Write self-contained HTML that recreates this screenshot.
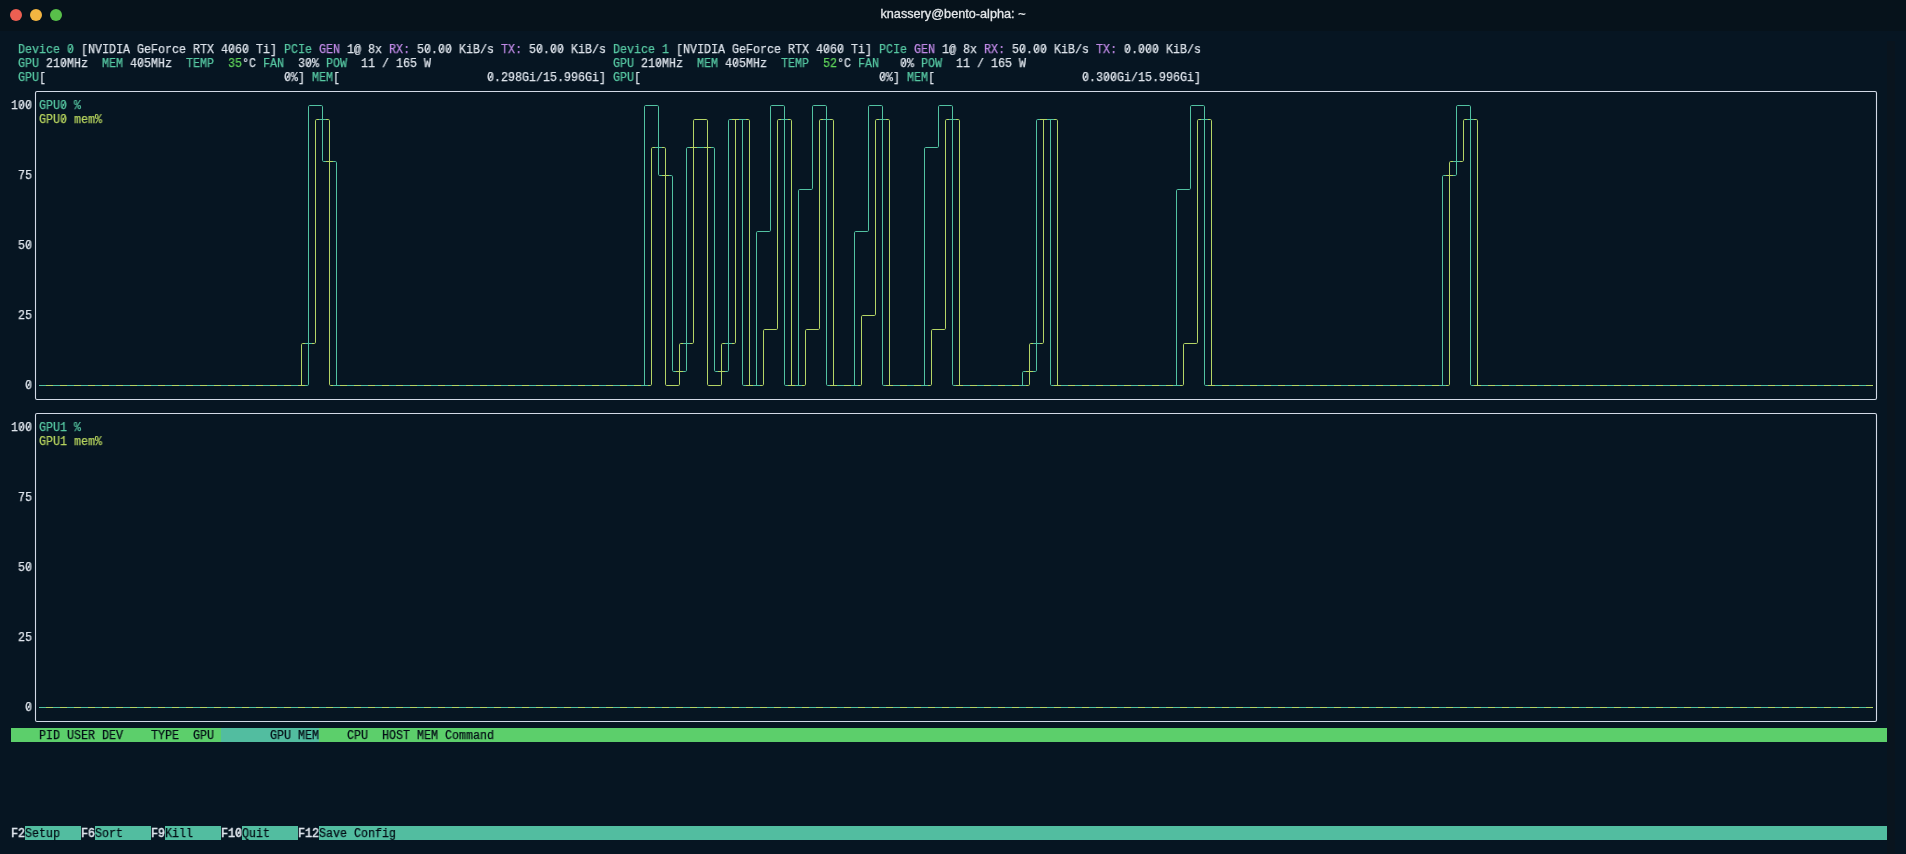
<!DOCTYPE html>
<html><head><meta charset="utf-8"><style>
html,body{margin:0;padding:0;}
body{width:1906px;height:854px;overflow:hidden;background:#061522;position:relative;}
.tb{position:absolute;left:0;top:0;width:1906px;height:31px;background:#06121b;}
.dot{position:absolute;top:9px;width:12px;height:12px;border-radius:50%;}
.title{position:absolute;left:0;top:6px;width:1906px;text-align:center;font-family:"Liberation Sans",sans-serif;font-size:12.7px;color:#e4e7ea;line-height:16px;-webkit-text-stroke:0.3px #e4e7ea;will-change:transform;}
.t{position:absolute;height:14px;line-height:14px;font-family:"Liberation Mono",monospace;font-size:12.5px;white-space:pre;transform-origin:0 0;transform:scaleX(0.93318);-webkit-text-stroke:0.25px currentColor;will-change:transform;}
.bar{position:absolute;height:14px;}
.sb{position:absolute;left:1887px;top:41px;width:8px;height:813px;background:#09141e;}
</style></head><body>
<div class="tb"></div>
<div class="dot" style="left:10px;background:#ec5f52"></div>
<div class="dot" style="left:30px;background:#f3b541"></div>
<div class="dot" style="left:50px;background:#58c04a"></div>
<div class="title">knassery@bento-alpha: ~</div>
<div class="sb"></div>

<div class="t" style="left:18px;top:43px;color:#57c8a3">Device 0</div>
<div class="t" style="left:74px;top:43px;color:#dee4ec"> [NVIDIA GeForce RTX 4060 Ti] </div>
<div class="t" style="left:284px;top:43px;color:#57c8a3">PCIe</div>
<div class="t" style="left:312px;top:43px;color:#dee4ec"> </div>
<div class="t" style="left:319px;top:43px;color:#c08ae6">GEN</div>
<div class="t" style="left:340px;top:43px;color:#dee4ec"> 1@ 8x </div>
<div class="t" style="left:389px;top:43px;color:#c08ae6">RX:</div>
<div class="t" style="left:410px;top:43px;color:#dee4ec"> 50.00 KiB/s </div>
<div class="t" style="left:501px;top:43px;color:#c08ae6">TX:</div>
<div class="t" style="left:522px;top:43px;color:#dee4ec"> 50.00 KiB/s</div>
<div class="t" style="left:613px;top:43px;color:#57c8a3">Device 1</div>
<div class="t" style="left:669px;top:43px;color:#dee4ec"> [NVIDIA GeForce RTX 4060 Ti] </div>
<div class="t" style="left:879px;top:43px;color:#57c8a3">PCIe</div>
<div class="t" style="left:907px;top:43px;color:#dee4ec"> </div>
<div class="t" style="left:914px;top:43px;color:#c08ae6">GEN</div>
<div class="t" style="left:935px;top:43px;color:#dee4ec"> 1@ 8x </div>
<div class="t" style="left:984px;top:43px;color:#c08ae6">RX:</div>
<div class="t" style="left:1005px;top:43px;color:#dee4ec"> 50.00 KiB/s </div>
<div class="t" style="left:1096px;top:43px;color:#c08ae6">TX:</div>
<div class="t" style="left:1117px;top:43px;color:#dee4ec"> 0.000 KiB/s</div>
<div class="t" style="left:18px;top:57px;color:#57c8a3">GPU</div>
<div class="t" style="left:39px;top:57px;color:#dee4ec"> 210MHz  </div>
<div class="t" style="left:102px;top:57px;color:#57c8a3">MEM</div>
<div class="t" style="left:123px;top:57px;color:#dee4ec"> 405MHz  </div>
<div class="t" style="left:186px;top:57px;color:#57c8a3">TEMP</div>
<div class="t" style="left:214px;top:57px;color:#dee4ec">  </div>
<div class="t" style="left:228px;top:57px;color:#5fd35a">35</div>
<div class="t" style="left:242px;top:57px;color:#dee4ec">°C </div>
<div class="t" style="left:263px;top:57px;color:#57c8a3">FAN</div>
<div class="t" style="left:284px;top:57px;color:#dee4ec">  30% </div>
<div class="t" style="left:326px;top:57px;color:#57c8a3">POW</div>
<div class="t" style="left:347px;top:57px;color:#dee4ec">  11 / 165 W</div>
<div class="t" style="left:613px;top:57px;color:#57c8a3">GPU</div>
<div class="t" style="left:634px;top:57px;color:#dee4ec"> 210MHz  </div>
<div class="t" style="left:697px;top:57px;color:#57c8a3">MEM</div>
<div class="t" style="left:718px;top:57px;color:#dee4ec"> 405MHz  </div>
<div class="t" style="left:781px;top:57px;color:#57c8a3">TEMP</div>
<div class="t" style="left:809px;top:57px;color:#dee4ec">  </div>
<div class="t" style="left:823px;top:57px;color:#5fd35a">52</div>
<div class="t" style="left:837px;top:57px;color:#dee4ec">°C </div>
<div class="t" style="left:858px;top:57px;color:#57c8a3">FAN</div>
<div class="t" style="left:879px;top:57px;color:#dee4ec">   0% </div>
<div class="t" style="left:921px;top:57px;color:#57c8a3">POW</div>
<div class="t" style="left:942px;top:57px;color:#dee4ec">  11 / 165 W</div>
<div class="t" style="left:18px;top:71px;color:#57c8a3">GPU</div>
<div class="t" style="left:39px;top:71px;color:#dee4ec">[</div>
<div class="t" style="left:284px;top:71px;color:#dee4ec">0%]</div>
<div class="t" style="left:312px;top:71px;color:#57c8a3">MEM</div>
<div class="t" style="left:333px;top:71px;color:#dee4ec">[</div>
<div class="t" style="left:487px;top:71px;color:#dee4ec">0.298Gi/15.996Gi]</div>
<div class="t" style="left:613px;top:71px;color:#57c8a3">GPU</div>
<div class="t" style="left:634px;top:71px;color:#dee4ec">[</div>
<div class="t" style="left:879px;top:71px;color:#dee4ec">0%]</div>
<div class="t" style="left:907px;top:71px;color:#57c8a3">MEM</div>
<div class="t" style="left:928px;top:71px;color:#dee4ec">[</div>
<div class="t" style="left:1082px;top:71px;color:#dee4ec">0.300Gi/15.996Gi]</div>
<div class="t" style="left:11px;top:99px;color:#dee4ec">100</div>
<div class="t" style="left:11px;top:169px;color:#dee4ec"> 75</div>
<div class="t" style="left:11px;top:239px;color:#dee4ec"> 50</div>
<div class="t" style="left:11px;top:309px;color:#dee4ec"> 25</div>
<div class="t" style="left:11px;top:379px;color:#dee4ec">  0</div>
<div class="t" style="left:11px;top:421px;color:#dee4ec">100</div>
<div class="t" style="left:11px;top:491px;color:#dee4ec"> 75</div>
<div class="t" style="left:11px;top:561px;color:#dee4ec"> 50</div>
<div class="t" style="left:11px;top:631px;color:#dee4ec"> 25</div>
<div class="t" style="left:11px;top:701px;color:#dee4ec">  0</div>
<svg width="1906" height="854" style="position:absolute;left:0;top:0">
<path d="M37 91.5H1875Q1876.5 91.5 1876.5 93V398Q1876.5 399.5 1875 399.5H37Q35.5 399.5 35.5 398V93Q35.5 91.5 37 91.5ZM37 413.5H1875Q1876.5 413.5 1876.5 415V720Q1876.5 721.5 1875 721.5H37Q35.5 721.5 35.5 720V415Q35.5 413.5 37 413.5Z" fill="none" stroke="#d2d9e6" stroke-width="1.1"/>
<path d="M39 385.5H46M53 385.5H60M67 385.5H74M81 385.5H88M95 385.5H102M109 385.5H116M123 385.5H130M137 385.5H144M151 385.5H158M165 385.5H172M179 385.5H186M193 385.5H200M207 385.5H214M221 385.5H228M235 385.5H242M249 385.5H256M263 385.5H270M277 385.5H284M291 385.5H298M305 385.5H307.3Q308.5 385.5 308.5 384.3V378M308.5 112V126M308.5 126V140M308.5 140V154M308.5 154V168M308.5 168V182M308.5 182V196M308.5 196V210M308.5 210V224M308.5 224V238M308.5 238V252M308.5 252V266M308.5 266V280M308.5 280V294M308.5 294V308M308.5 308V322M308.5 322V336M305 343.5H312M308.5 336V350M308.5 350V364M308.5 364V378M312 105.5H309.7Q308.5 105.5 308.5 106.7V112M312 105.5H319M319 105.5H321.3Q322.5 105.5 322.5 106.7V112M319 119.5H326M322.5 112V126M322.5 126V140M322.5 140V154M326 161.5H323.7Q322.5 161.5 322.5 160.3V154M333 161.5H335.3Q336.5 161.5 336.5 162.7V168M336.5 168V182M336.5 182V196M336.5 196V210M336.5 210V224M336.5 224V238M336.5 238V252M336.5 252V266M336.5 266V280M336.5 280V294M336.5 294V308M336.5 308V322M336.5 322V336M336.5 336V350M336.5 350V364M336.5 364V378M333 385.5H340M336.5 378V385.5M347 385.5H354M361 385.5H368M375 385.5H382M389 385.5H396M403 385.5H410M417 385.5H424M431 385.5H438M445 385.5H452M459 385.5H466M473 385.5H480M487 385.5H494M501 385.5H508M515 385.5H522M529 385.5H536M543 385.5H550M557 385.5H564M571 385.5H578M585 385.5H592M599 385.5H606M613 385.5H620M627 385.5H634M641 385.5H648M644.5 378V385.5M644.5 112V126M644.5 126V140M644.5 140V154M644.5 154V168M644.5 168V182M644.5 182V196M644.5 196V210M644.5 210V224M644.5 224V238M644.5 238V252M644.5 252V266M644.5 266V280M644.5 280V294M644.5 294V308M644.5 308V322M644.5 322V336M644.5 336V350M644.5 350V364M644.5 364V378M648 105.5H645.7Q644.5 105.5 644.5 106.7V112M648 105.5H655M655 105.5H657.3Q658.5 105.5 658.5 106.7V112M658.5 112V126M658.5 126V140M655 147.5H662M658.5 140V154M658.5 154V168M662 175.5H659.7Q658.5 175.5 658.5 174.3V168M669 175.5H671.3Q672.5 175.5 672.5 176.7V182M672.5 182V196M672.5 196V210M672.5 210V224M672.5 224V238M672.5 238V252M672.5 252V266M672.5 266V280M672.5 280V294M672.5 294V308M672.5 308V322M672.5 322V336M672.5 336V350M672.5 350V364M676 371.5H673.7Q672.5 371.5 672.5 370.3V364M683 371.5H685.3Q686.5 371.5 686.5 370.3V364M686.5 154V168M686.5 168V182M686.5 182V196M686.5 196V210M686.5 210V224M686.5 224V238M686.5 238V252M686.5 252V266M686.5 266V280M686.5 280V294M686.5 294V308M686.5 308V322M686.5 322V336M683 343.5H690M686.5 336V350M686.5 350V364M690 147.5H687.7Q686.5 147.5 686.5 148.7V154M697 147.5H704M711 147.5H713.3Q714.5 147.5 714.5 148.7V154M714.5 154V168M714.5 168V182M714.5 182V196M714.5 196V210M714.5 210V224M714.5 224V238M714.5 238V252M714.5 252V266M714.5 266V280M714.5 280V294M714.5 294V308M714.5 308V322M714.5 322V336M714.5 336V350M714.5 350V364M718 371.5H715.7Q714.5 371.5 714.5 370.3V364M725 371.5H727.3Q728.5 371.5 728.5 370.3V364M728.5 126V140M728.5 140V154M728.5 154V168M728.5 168V182M728.5 182V196M728.5 196V210M728.5 210V224M728.5 224V238M728.5 238V252M728.5 252V266M728.5 266V280M728.5 280V294M728.5 294V308M728.5 308V322M728.5 322V336M725 343.5H732M728.5 336V350M728.5 350V364M732 119.5H729.7Q728.5 119.5 728.5 120.7V126M739 119.5H746M742.5 119.5V126M742.5 126V140M742.5 140V154M742.5 154V168M742.5 168V182M742.5 182V196M742.5 196V210M742.5 210V224M742.5 224V238M742.5 238V252M742.5 252V266M742.5 266V280M742.5 280V294M742.5 294V308M742.5 308V322M742.5 322V336M742.5 336V350M742.5 350V364M742.5 364V378M746 385.5H743.7Q742.5 385.5 742.5 384.3V378M753 385.5H760M756.5 378V385.5M756.5 238V252M756.5 252V266M756.5 266V280M756.5 280V294M756.5 294V308M756.5 308V322M756.5 322V336M756.5 336V350M756.5 350V364M756.5 364V378M760 231.5H757.7Q756.5 231.5 756.5 232.7V238M760 231.5H767M767 231.5H769.3Q770.5 231.5 770.5 230.3V224M770.5 112V126M770.5 126V140M770.5 140V154M770.5 154V168M770.5 168V182M770.5 182V196M770.5 196V210M770.5 210V224M774 105.5H771.7Q770.5 105.5 770.5 106.7V112M774 105.5H781M781 105.5H783.3Q784.5 105.5 784.5 106.7V112M781 119.5H788M784.5 112V126M784.5 126V140M784.5 140V154M784.5 154V168M784.5 168V182M784.5 182V196M784.5 196V210M784.5 210V224M784.5 224V238M784.5 238V252M784.5 252V266M784.5 266V280M784.5 280V294M784.5 294V308M784.5 308V322M784.5 322V336M784.5 336V350M784.5 350V364M784.5 364V378M788 385.5H785.7Q784.5 385.5 784.5 384.3V378M795 385.5H802M798.5 378V385.5M798.5 196V210M798.5 210V224M798.5 224V238M798.5 238V252M798.5 252V266M798.5 266V280M798.5 280V294M798.5 294V308M798.5 308V322M798.5 322V336M798.5 336V350M798.5 350V364M798.5 364V378M802 189.5H799.7Q798.5 189.5 798.5 190.7V196M802 189.5H809M809 189.5H811.3Q812.5 189.5 812.5 188.3V182M812.5 112V126M812.5 126V140M812.5 140V154M812.5 154V168M812.5 168V182M816 105.5H813.7Q812.5 105.5 812.5 106.7V112M816 105.5H823M823 105.5H825.3Q826.5 105.5 826.5 106.7V112M823 119.5H830M826.5 112V126M826.5 126V140M826.5 140V154M826.5 154V168M826.5 168V182M826.5 182V196M826.5 196V210M826.5 210V224M826.5 224V238M826.5 238V252M826.5 252V266M826.5 266V280M826.5 280V294M826.5 294V308M826.5 308V322M826.5 322V336M826.5 336V350M826.5 350V364M826.5 364V378M830 385.5H827.7Q826.5 385.5 826.5 384.3V378M837 385.5H844M851 385.5H858M854.5 378V385.5M854.5 238V252M854.5 252V266M854.5 266V280M854.5 280V294M854.5 294V308M854.5 308V322M854.5 322V336M854.5 336V350M854.5 350V364M854.5 364V378M858 231.5H855.7Q854.5 231.5 854.5 232.7V238M858 231.5H865M865 231.5H867.3Q868.5 231.5 868.5 230.3V224M868.5 112V126M868.5 126V140M868.5 140V154M868.5 154V168M868.5 168V182M868.5 182V196M868.5 196V210M868.5 210V224M872 105.5H869.7Q868.5 105.5 868.5 106.7V112M872 105.5H879M879 105.5H881.3Q882.5 105.5 882.5 106.7V112M879 119.5H886M882.5 112V126M882.5 126V140M882.5 140V154M882.5 154V168M882.5 168V182M882.5 182V196M882.5 196V210M882.5 210V224M882.5 224V238M882.5 238V252M882.5 252V266M882.5 266V280M882.5 280V294M882.5 294V308M882.5 308V322M882.5 322V336M882.5 336V350M882.5 350V364M882.5 364V378M886 385.5H883.7Q882.5 385.5 882.5 384.3V378M893 385.5H900M907 385.5H914M921 385.5H928M924.5 378V385.5M924.5 154V168M924.5 168V182M924.5 182V196M924.5 196V210M924.5 210V224M924.5 224V238M924.5 238V252M924.5 252V266M924.5 266V280M924.5 280V294M924.5 294V308M924.5 308V322M924.5 322V336M924.5 336V350M924.5 350V364M924.5 364V378M928 147.5H925.7Q924.5 147.5 924.5 148.7V154M928 147.5H935M935 147.5H937.3Q938.5 147.5 938.5 146.3V140M938.5 112V126M938.5 126V140M942 105.5H939.7Q938.5 105.5 938.5 106.7V112M942 105.5H949M949 105.5H951.3Q952.5 105.5 952.5 106.7V112M949 119.5H956M952.5 112V126M952.5 126V140M952.5 140V154M952.5 154V168M952.5 168V182M952.5 182V196M952.5 196V210M952.5 210V224M952.5 224V238M952.5 238V252M952.5 252V266M952.5 266V280M952.5 280V294M952.5 294V308M952.5 308V322M952.5 322V336M952.5 336V350M952.5 350V364M952.5 364V378M956 385.5H953.7Q952.5 385.5 952.5 384.3V378M963 385.5H970M977 385.5H984M991 385.5H998M1005 385.5H1012M1019 385.5H1026M1022.5 378V385.5M1026 371.5H1023.7Q1022.5 371.5 1022.5 372.7V378M1033 371.5H1035.3Q1036.5 371.5 1036.5 370.3V364M1036.5 126V140M1036.5 140V154M1036.5 154V168M1036.5 168V182M1036.5 182V196M1036.5 196V210M1036.5 210V224M1036.5 224V238M1036.5 238V252M1036.5 252V266M1036.5 266V280M1036.5 280V294M1036.5 294V308M1036.5 308V322M1036.5 322V336M1033 343.5H1040M1036.5 336V350M1036.5 350V364M1040 119.5H1037.7Q1036.5 119.5 1036.5 120.7V126M1047 119.5H1054M1050.5 119.5V126M1050.5 126V140M1050.5 140V154M1050.5 154V168M1050.5 168V182M1050.5 182V196M1050.5 196V210M1050.5 210V224M1050.5 224V238M1050.5 238V252M1050.5 252V266M1050.5 266V280M1050.5 280V294M1050.5 294V308M1050.5 308V322M1050.5 322V336M1050.5 336V350M1050.5 350V364M1050.5 364V378M1054 385.5H1051.7Q1050.5 385.5 1050.5 384.3V378M1061 385.5H1068M1075 385.5H1082M1089 385.5H1096M1103 385.5H1110M1117 385.5H1124M1131 385.5H1138M1145 385.5H1152M1159 385.5H1166M1173 385.5H1180M1176.5 378V385.5M1176.5 196V210M1176.5 210V224M1176.5 224V238M1176.5 238V252M1176.5 252V266M1176.5 266V280M1176.5 280V294M1176.5 294V308M1176.5 308V322M1176.5 322V336M1176.5 336V350M1176.5 350V364M1176.5 364V378M1180 189.5H1177.7Q1176.5 189.5 1176.5 190.7V196M1180 189.5H1187M1187 189.5H1189.3Q1190.5 189.5 1190.5 188.3V182M1190.5 112V126M1190.5 126V140M1190.5 140V154M1190.5 154V168M1190.5 168V182M1194 105.5H1191.7Q1190.5 105.5 1190.5 106.7V112M1194 105.5H1201M1201 105.5H1203.3Q1204.5 105.5 1204.5 106.7V112M1201 119.5H1208M1204.5 112V126M1204.5 126V140M1204.5 140V154M1204.5 154V168M1204.5 168V182M1204.5 182V196M1204.5 196V210M1204.5 210V224M1204.5 224V238M1204.5 238V252M1204.5 252V266M1204.5 266V280M1204.5 280V294M1204.5 294V308M1204.5 308V322M1204.5 322V336M1204.5 336V350M1204.5 350V364M1204.5 364V378M1208 385.5H1205.7Q1204.5 385.5 1204.5 384.3V378M1215 385.5H1222M1229 385.5H1236M1243 385.5H1250M1257 385.5H1264M1271 385.5H1278M1285 385.5H1292M1299 385.5H1306M1313 385.5H1320M1327 385.5H1334M1341 385.5H1348M1355 385.5H1362M1369 385.5H1376M1383 385.5H1390M1397 385.5H1404M1411 385.5H1418M1425 385.5H1432M1439 385.5H1446M1442.5 378V385.5M1442.5 182V196M1442.5 196V210M1442.5 210V224M1442.5 224V238M1442.5 238V252M1442.5 252V266M1442.5 266V280M1442.5 280V294M1442.5 294V308M1442.5 308V322M1442.5 322V336M1442.5 336V350M1442.5 350V364M1442.5 364V378M1446 175.5H1443.7Q1442.5 175.5 1442.5 176.7V182M1453 175.5H1455.3Q1456.5 175.5 1456.5 174.3V168M1456.5 112V126M1456.5 126V140M1456.5 140V154M1453 161.5H1460M1456.5 154V168M1460 105.5H1457.7Q1456.5 105.5 1456.5 106.7V112M1460 105.5H1467M1467 105.5H1469.3Q1470.5 105.5 1470.5 106.7V112M1467 119.5H1474M1470.5 112V126M1470.5 126V140M1470.5 140V154M1470.5 154V168M1470.5 168V182M1470.5 182V196M1470.5 196V210M1470.5 210V224M1470.5 224V238M1470.5 238V252M1470.5 252V266M1470.5 266V280M1470.5 280V294M1470.5 294V308M1470.5 308V322M1470.5 322V336M1470.5 336V350M1470.5 350V364M1470.5 364V378M1474 385.5H1471.7Q1470.5 385.5 1470.5 384.3V378M1481 385.5H1488M1495 385.5H1502M1509 385.5H1516M1523 385.5H1530M1537 385.5H1544M1551 385.5H1558M1565 385.5H1572M1579 385.5H1586M1593 385.5H1600M1607 385.5H1614M1621 385.5H1628M1635 385.5H1642M1649 385.5H1656M1663 385.5H1670M1677 385.5H1684M1691 385.5H1698M1705 385.5H1712M1719 385.5H1726M1733 385.5H1740M1747 385.5H1754M1761 385.5H1768M1775 385.5H1782M1789 385.5H1796M1803 385.5H1810M1817 385.5H1824M1831 385.5H1838M1845 385.5H1852M1859 385.5H1866M39 707.5H46M53 707.5H60M67 707.5H74M81 707.5H88M95 707.5H102M109 707.5H116M123 707.5H130M137 707.5H144M151 707.5H158M165 707.5H172M179 707.5H186M193 707.5H200M207 707.5H214M221 707.5H228M235 707.5H242M249 707.5H256M263 707.5H270M277 707.5H284M291 707.5H298M305 707.5H312M319 707.5H326M333 707.5H340M347 707.5H354M361 707.5H368M375 707.5H382M389 707.5H396M403 707.5H410M417 707.5H424M431 707.5H438M445 707.5H452M459 707.5H466M473 707.5H480M487 707.5H494M501 707.5H508M515 707.5H522M529 707.5H536M543 707.5H550M557 707.5H564M571 707.5H578M585 707.5H592M599 707.5H606M613 707.5H620M627 707.5H634M641 707.5H648M655 707.5H662M669 707.5H676M683 707.5H690M697 707.5H704M711 707.5H718M725 707.5H732M739 707.5H746M753 707.5H760M767 707.5H774M781 707.5H788M795 707.5H802M809 707.5H816M823 707.5H830M837 707.5H844M851 707.5H858M865 707.5H872M879 707.5H886M893 707.5H900M907 707.5H914M921 707.5H928M935 707.5H942M949 707.5H956M963 707.5H970M977 707.5H984M991 707.5H998M1005 707.5H1012M1019 707.5H1026M1033 707.5H1040M1047 707.5H1054M1061 707.5H1068M1075 707.5H1082M1089 707.5H1096M1103 707.5H1110M1117 707.5H1124M1131 707.5H1138M1145 707.5H1152M1159 707.5H1166M1173 707.5H1180M1187 707.5H1194M1201 707.5H1208M1215 707.5H1222M1229 707.5H1236M1243 707.5H1250M1257 707.5H1264M1271 707.5H1278M1285 707.5H1292M1299 707.5H1306M1313 707.5H1320M1327 707.5H1334M1341 707.5H1348M1355 707.5H1362M1369 707.5H1376M1383 707.5H1390M1397 707.5H1404M1411 707.5H1418M1425 707.5H1432M1439 707.5H1446M1453 707.5H1460M1467 707.5H1474M1481 707.5H1488M1495 707.5H1502M1509 707.5H1516M1523 707.5H1530M1537 707.5H1544M1551 707.5H1558M1565 707.5H1572M1579 707.5H1586M1593 707.5H1600M1607 707.5H1614M1621 707.5H1628M1635 707.5H1642M1649 707.5H1656M1663 707.5H1670M1677 707.5H1684M1691 707.5H1698M1705 707.5H1712M1719 707.5H1726M1733 707.5H1740M1747 707.5H1754M1761 707.5H1768M1775 707.5H1782M1789 707.5H1796M1803 707.5H1810M1817 707.5H1824M1831 707.5H1838M1845 707.5H1852M1859 707.5H1866" fill="none" stroke="#52c2a2" stroke-width="1"/>
<path d="M46 385.5H53M60 385.5H67M74 385.5H81M88 385.5H95M102 385.5H109M116 385.5H123M130 385.5H137M144 385.5H151M158 385.5H165M172 385.5H179M186 385.5H193M200 385.5H207M214 385.5H221M228 385.5H235M242 385.5H249M256 385.5H263M270 385.5H277M284 385.5H291M298 385.5H305M301.5 378V385.5M326 161.5H333M329.5 154V168M340 385.5H347M354 385.5H361M368 385.5H375M382 385.5H389M396 385.5H403M410 385.5H417M424 385.5H431M438 385.5H445M452 385.5H459M466 385.5H473M480 385.5H487M494 385.5H501M508 385.5H515M522 385.5H529M536 385.5H543M550 385.5H557M564 385.5H571M578 385.5H585M592 385.5H599M606 385.5H613M620 385.5H627M634 385.5H641M662 175.5H669M665.5 168V182M676 371.5H683M679.5 364V378M690 147.5H697M693.5 140V154M704 147.5H711M707.5 140V154M718 371.5H725M721.5 364V378M732 119.5H739M735.5 119.5V126M746 385.5H753M749.5 378V385.5M788 385.5H795M791.5 378V385.5M830 385.5H837M833.5 378V385.5M844 385.5H851M886 385.5H893M889.5 378V385.5M900 385.5H907M914 385.5H921M956 385.5H963M959.5 378V385.5M970 385.5H977M984 385.5H991M998 385.5H1005M1012 385.5H1019M1026 371.5H1033M1029.5 364V378M1040 119.5H1047M1043.5 119.5V126M1054 385.5H1061M1057.5 378V385.5M1068 385.5H1075M1082 385.5H1089M1096 385.5H1103M1110 385.5H1117M1124 385.5H1131M1138 385.5H1145M1152 385.5H1159M1166 385.5H1173M1208 385.5H1215M1211.5 378V385.5M1222 385.5H1229M1236 385.5H1243M1250 385.5H1257M1264 385.5H1271M1278 385.5H1285M1292 385.5H1299M1306 385.5H1313M1320 385.5H1327M1334 385.5H1341M1348 385.5H1355M1362 385.5H1369M1376 385.5H1383M1390 385.5H1397M1404 385.5H1411M1418 385.5H1425M1432 385.5H1439M1446 175.5H1453M1449.5 168V182M1474 385.5H1481M1477.5 378V385.5M1488 385.5H1495M1502 385.5H1509M1516 385.5H1523M1530 385.5H1537M1544 385.5H1551M1558 385.5H1565M1572 385.5H1579M1586 385.5H1593M1600 385.5H1607M1614 385.5H1621M1628 385.5H1635M1642 385.5H1649M1656 385.5H1663M1670 385.5H1677M1684 385.5H1691M1698 385.5H1705M1712 385.5H1719M1726 385.5H1733M1740 385.5H1747M1754 385.5H1761M1768 385.5H1775M1782 385.5H1789M1796 385.5H1803M1810 385.5H1817M1824 385.5H1831M1838 385.5H1845M1852 385.5H1859M1866 385.5H1873M301.5 350V364M301.5 364V378M305 343.5H302.7Q301.5 343.5 301.5 344.7V350M312 343.5H314.3Q315.5 343.5 315.5 342.3V336M315.5 126V140M315.5 140V154M315.5 154V168M315.5 168V182M315.5 182V196M315.5 196V210M315.5 210V224M315.5 224V238M315.5 238V252M315.5 252V266M315.5 266V280M315.5 280V294M315.5 294V308M315.5 308V322M315.5 322V336M319 119.5H316.7Q315.5 119.5 315.5 120.7V126M326 119.5H328.3Q329.5 119.5 329.5 120.7V126M329.5 126V140M329.5 140V154M329.5 168V182M329.5 182V196M329.5 196V210M329.5 210V224M329.5 224V238M329.5 238V252M329.5 252V266M329.5 266V280M329.5 280V294M329.5 294V308M329.5 308V322M329.5 322V336M329.5 336V350M329.5 350V364M329.5 364V378M333 385.5H330.7Q329.5 385.5 329.5 384.3V378M648 385.5H650.3Q651.5 385.5 651.5 384.3V378M651.5 154V168M651.5 168V182M651.5 182V196M651.5 196V210M651.5 210V224M651.5 224V238M651.5 238V252M651.5 252V266M651.5 266V280M651.5 280V294M651.5 294V308M651.5 308V322M651.5 322V336M651.5 336V350M651.5 350V364M651.5 364V378M655 147.5H652.7Q651.5 147.5 651.5 148.7V154M662 147.5H664.3Q665.5 147.5 665.5 148.7V154M665.5 154V168M665.5 182V196M665.5 196V210M665.5 210V224M665.5 224V238M665.5 238V252M665.5 252V266M665.5 266V280M665.5 280V294M665.5 294V308M665.5 308V322M665.5 322V336M665.5 336V350M665.5 350V364M665.5 364V378M669 385.5H666.7Q665.5 385.5 665.5 384.3V378M669 385.5H676M676 385.5H678.3Q679.5 385.5 679.5 384.3V378M679.5 350V364M683 343.5H680.7Q679.5 343.5 679.5 344.7V350M690 343.5H692.3Q693.5 343.5 693.5 342.3V336M693.5 126V140M693.5 154V168M693.5 168V182M693.5 182V196M693.5 196V210M693.5 210V224M693.5 224V238M693.5 238V252M693.5 252V266M693.5 266V280M693.5 280V294M693.5 294V308M693.5 308V322M693.5 322V336M697 119.5H694.7Q693.5 119.5 693.5 120.7V126M697 119.5H704M704 119.5H706.3Q707.5 119.5 707.5 120.7V126M707.5 126V140M707.5 154V168M707.5 168V182M707.5 182V196M707.5 196V210M707.5 210V224M707.5 224V238M707.5 238V252M707.5 252V266M707.5 266V280M707.5 280V294M707.5 294V308M707.5 308V322M707.5 322V336M707.5 336V350M707.5 350V364M707.5 364V378M711 385.5H708.7Q707.5 385.5 707.5 384.3V378M711 385.5H718M718 385.5H720.3Q721.5 385.5 721.5 384.3V378M721.5 350V364M725 343.5H722.7Q721.5 343.5 721.5 344.7V350M732 343.5H734.3Q735.5 343.5 735.5 342.3V336M735.5 126V140M735.5 140V154M735.5 154V168M735.5 168V182M735.5 182V196M735.5 196V210M735.5 210V224M735.5 224V238M735.5 238V252M735.5 252V266M735.5 266V280M735.5 280V294M735.5 294V308M735.5 308V322M735.5 322V336M746 119.5H748.3Q749.5 119.5 749.5 120.7V126M749.5 126V140M749.5 140V154M749.5 154V168M749.5 168V182M749.5 182V196M749.5 196V210M749.5 210V224M749.5 224V238M749.5 238V252M749.5 252V266M749.5 266V280M749.5 280V294M749.5 294V308M749.5 308V322M749.5 322V336M749.5 336V350M749.5 350V364M749.5 364V378M760 385.5H762.3Q763.5 385.5 763.5 384.3V378M763.5 336V350M763.5 350V364M763.5 364V378M767 329.5H764.7Q763.5 329.5 763.5 330.7V336M767 329.5H774M774 329.5H776.3Q777.5 329.5 777.5 328.3V322M777.5 126V140M777.5 140V154M777.5 154V168M777.5 168V182M777.5 182V196M777.5 196V210M777.5 210V224M777.5 224V238M777.5 238V252M777.5 252V266M777.5 266V280M777.5 280V294M777.5 294V308M777.5 308V322M781 119.5H778.7Q777.5 119.5 777.5 120.7V126M788 119.5H790.3Q791.5 119.5 791.5 120.7V126M791.5 126V140M791.5 140V154M791.5 154V168M791.5 168V182M791.5 182V196M791.5 196V210M791.5 210V224M791.5 224V238M791.5 238V252M791.5 252V266M791.5 266V280M791.5 280V294M791.5 294V308M791.5 308V322M791.5 322V336M791.5 336V350M791.5 350V364M791.5 364V378M802 385.5H804.3Q805.5 385.5 805.5 384.3V378M805.5 336V350M805.5 350V364M805.5 364V378M809 329.5H806.7Q805.5 329.5 805.5 330.7V336M809 329.5H816M816 329.5H818.3Q819.5 329.5 819.5 328.3V322M819.5 126V140M819.5 140V154M819.5 154V168M819.5 168V182M819.5 182V196M819.5 196V210M819.5 210V224M819.5 224V238M819.5 238V252M819.5 252V266M819.5 266V280M819.5 280V294M819.5 294V308M819.5 308V322M823 119.5H820.7Q819.5 119.5 819.5 120.7V126M830 119.5H832.3Q833.5 119.5 833.5 120.7V126M833.5 126V140M833.5 140V154M833.5 154V168M833.5 168V182M833.5 182V196M833.5 196V210M833.5 210V224M833.5 224V238M833.5 238V252M833.5 252V266M833.5 266V280M833.5 280V294M833.5 294V308M833.5 308V322M833.5 322V336M833.5 336V350M833.5 350V364M833.5 364V378M858 385.5H860.3Q861.5 385.5 861.5 384.3V378M861.5 322V336M861.5 336V350M861.5 350V364M861.5 364V378M865 315.5H862.7Q861.5 315.5 861.5 316.7V322M865 315.5H872M872 315.5H874.3Q875.5 315.5 875.5 314.3V308M875.5 126V140M875.5 140V154M875.5 154V168M875.5 168V182M875.5 182V196M875.5 196V210M875.5 210V224M875.5 224V238M875.5 238V252M875.5 252V266M875.5 266V280M875.5 280V294M875.5 294V308M879 119.5H876.7Q875.5 119.5 875.5 120.7V126M886 119.5H888.3Q889.5 119.5 889.5 120.7V126M889.5 126V140M889.5 140V154M889.5 154V168M889.5 168V182M889.5 182V196M889.5 196V210M889.5 210V224M889.5 224V238M889.5 238V252M889.5 252V266M889.5 266V280M889.5 280V294M889.5 294V308M889.5 308V322M889.5 322V336M889.5 336V350M889.5 350V364M889.5 364V378M928 385.5H930.3Q931.5 385.5 931.5 384.3V378M931.5 336V350M931.5 350V364M931.5 364V378M935 329.5H932.7Q931.5 329.5 931.5 330.7V336M935 329.5H942M942 329.5H944.3Q945.5 329.5 945.5 328.3V322M945.5 126V140M945.5 140V154M945.5 154V168M945.5 168V182M945.5 182V196M945.5 196V210M945.5 210V224M945.5 224V238M945.5 238V252M945.5 252V266M945.5 266V280M945.5 280V294M945.5 294V308M945.5 308V322M949 119.5H946.7Q945.5 119.5 945.5 120.7V126M956 119.5H958.3Q959.5 119.5 959.5 120.7V126M959.5 126V140M959.5 140V154M959.5 154V168M959.5 168V182M959.5 182V196M959.5 196V210M959.5 210V224M959.5 224V238M959.5 238V252M959.5 252V266M959.5 266V280M959.5 280V294M959.5 294V308M959.5 308V322M959.5 322V336M959.5 336V350M959.5 350V364M959.5 364V378M1026 385.5H1028.3Q1029.5 385.5 1029.5 384.3V378M1029.5 350V364M1033 343.5H1030.7Q1029.5 343.5 1029.5 344.7V350M1040 343.5H1042.3Q1043.5 343.5 1043.5 342.3V336M1043.5 126V140M1043.5 140V154M1043.5 154V168M1043.5 168V182M1043.5 182V196M1043.5 196V210M1043.5 210V224M1043.5 224V238M1043.5 238V252M1043.5 252V266M1043.5 266V280M1043.5 280V294M1043.5 294V308M1043.5 308V322M1043.5 322V336M1054 119.5H1056.3Q1057.5 119.5 1057.5 120.7V126M1057.5 126V140M1057.5 140V154M1057.5 154V168M1057.5 168V182M1057.5 182V196M1057.5 196V210M1057.5 210V224M1057.5 224V238M1057.5 238V252M1057.5 252V266M1057.5 266V280M1057.5 280V294M1057.5 294V308M1057.5 308V322M1057.5 322V336M1057.5 336V350M1057.5 350V364M1057.5 364V378M1180 385.5H1182.3Q1183.5 385.5 1183.5 384.3V378M1183.5 350V364M1183.5 364V378M1187 343.5H1184.7Q1183.5 343.5 1183.5 344.7V350M1187 343.5H1194M1194 343.5H1196.3Q1197.5 343.5 1197.5 342.3V336M1197.5 126V140M1197.5 140V154M1197.5 154V168M1197.5 168V182M1197.5 182V196M1197.5 196V210M1197.5 210V224M1197.5 224V238M1197.5 238V252M1197.5 252V266M1197.5 266V280M1197.5 280V294M1197.5 294V308M1197.5 308V322M1197.5 322V336M1201 119.5H1198.7Q1197.5 119.5 1197.5 120.7V126M1208 119.5H1210.3Q1211.5 119.5 1211.5 120.7V126M1211.5 126V140M1211.5 140V154M1211.5 154V168M1211.5 168V182M1211.5 182V196M1211.5 196V210M1211.5 210V224M1211.5 224V238M1211.5 238V252M1211.5 252V266M1211.5 266V280M1211.5 280V294M1211.5 294V308M1211.5 308V322M1211.5 322V336M1211.5 336V350M1211.5 350V364M1211.5 364V378M1446 385.5H1448.3Q1449.5 385.5 1449.5 384.3V378M1449.5 182V196M1449.5 196V210M1449.5 210V224M1449.5 224V238M1449.5 238V252M1449.5 252V266M1449.5 266V280M1449.5 280V294M1449.5 294V308M1449.5 308V322M1449.5 322V336M1449.5 336V350M1449.5 350V364M1449.5 364V378M1453 161.5H1450.7Q1449.5 161.5 1449.5 162.7V168M1460 161.5H1462.3Q1463.5 161.5 1463.5 160.3V154M1463.5 126V140M1463.5 140V154M1467 119.5H1464.7Q1463.5 119.5 1463.5 120.7V126M1474 119.5H1476.3Q1477.5 119.5 1477.5 120.7V126M1477.5 126V140M1477.5 140V154M1477.5 154V168M1477.5 168V182M1477.5 182V196M1477.5 196V210M1477.5 210V224M1477.5 224V238M1477.5 238V252M1477.5 252V266M1477.5 266V280M1477.5 280V294M1477.5 294V308M1477.5 308V322M1477.5 322V336M1477.5 336V350M1477.5 350V364M1477.5 364V378M46 707.5H53M60 707.5H67M74 707.5H81M88 707.5H95M102 707.5H109M116 707.5H123M130 707.5H137M144 707.5H151M158 707.5H165M172 707.5H179M186 707.5H193M200 707.5H207M214 707.5H221M228 707.5H235M242 707.5H249M256 707.5H263M270 707.5H277M284 707.5H291M298 707.5H305M312 707.5H319M326 707.5H333M340 707.5H347M354 707.5H361M368 707.5H375M382 707.5H389M396 707.5H403M410 707.5H417M424 707.5H431M438 707.5H445M452 707.5H459M466 707.5H473M480 707.5H487M494 707.5H501M508 707.5H515M522 707.5H529M536 707.5H543M550 707.5H557M564 707.5H571M578 707.5H585M592 707.5H599M606 707.5H613M620 707.5H627M634 707.5H641M648 707.5H655M662 707.5H669M676 707.5H683M690 707.5H697M704 707.5H711M718 707.5H725M732 707.5H739M746 707.5H753M760 707.5H767M774 707.5H781M788 707.5H795M802 707.5H809M816 707.5H823M830 707.5H837M844 707.5H851M858 707.5H865M872 707.5H879M886 707.5H893M900 707.5H907M914 707.5H921M928 707.5H935M942 707.5H949M956 707.5H963M970 707.5H977M984 707.5H991M998 707.5H1005M1012 707.5H1019M1026 707.5H1033M1040 707.5H1047M1054 707.5H1061M1068 707.5H1075M1082 707.5H1089M1096 707.5H1103M1110 707.5H1117M1124 707.5H1131M1138 707.5H1145M1152 707.5H1159M1166 707.5H1173M1180 707.5H1187M1194 707.5H1201M1208 707.5H1215M1222 707.5H1229M1236 707.5H1243M1250 707.5H1257M1264 707.5H1271M1278 707.5H1285M1292 707.5H1299M1306 707.5H1313M1320 707.5H1327M1334 707.5H1341M1348 707.5H1355M1362 707.5H1369M1376 707.5H1383M1390 707.5H1397M1404 707.5H1411M1418 707.5H1425M1432 707.5H1439M1446 707.5H1453M1460 707.5H1467M1474 707.5H1481M1488 707.5H1495M1502 707.5H1509M1516 707.5H1523M1530 707.5H1537M1544 707.5H1551M1558 707.5H1565M1572 707.5H1579M1586 707.5H1593M1600 707.5H1607M1614 707.5H1621M1628 707.5H1635M1642 707.5H1649M1656 707.5H1663M1670 707.5H1677M1684 707.5H1691M1698 707.5H1705M1712 707.5H1719M1726 707.5H1733M1740 707.5H1747M1754 707.5H1761M1768 707.5H1775M1782 707.5H1789M1796 707.5H1803M1810 707.5H1817M1824 707.5H1831M1838 707.5H1845M1852 707.5H1859M1866 707.5H1873" fill="none" stroke="#b4d466" stroke-width="1"/>
</svg>
<div class="t" style="left:39px;top:99px;color:#57c8a3">GPU0 %</div>
<div class="t" style="left:39px;top:113px;color:#b6d35e">GPU0 mem%</div>
<div class="t" style="left:39px;top:421px;color:#57c8a3">GPU1 %</div>
<div class="t" style="left:39px;top:435px;color:#b6d35e">GPU1 mem%</div>
<div class="bar" style="left:11px;top:728px;width:1876px;background:#5ccf6b"></div>
<div class="bar" style="left:221px;top:728px;width:98px;background:#52bda0"></div>
<div class="bar" style="left:25px;top:826px;width:56px;background:#52bda0"></div>
<div class="bar" style="left:95px;top:826px;width:56px;background:#52bda0"></div>
<div class="bar" style="left:165px;top:826px;width:56px;background:#52bda0"></div>
<div class="bar" style="left:242px;top:826px;width:56px;background:#52bda0"></div>
<div class="bar" style="left:319px;top:826px;width:1568px;background:#52bda0"></div>
<div class="t" style="left:39px;top:729px;color:#040e16">PID</div>
<div class="t" style="left:67px;top:729px;color:#040e16">USER</div>
<div class="t" style="left:102px;top:729px;color:#040e16">DEV</div>
<div class="t" style="left:151px;top:729px;color:#040e16">TYPE</div>
<div class="t" style="left:193px;top:729px;color:#040e16">GPU</div>
<div class="t" style="left:270px;top:729px;color:#040e16">GPU</div>
<div class="t" style="left:298px;top:729px;color:#040e16">MEM</div>
<div class="t" style="left:347px;top:729px;color:#040e16">CPU</div>
<div class="t" style="left:382px;top:729px;color:#040e16">HOST</div>
<div class="t" style="left:417px;top:729px;color:#040e16">MEM</div>
<div class="t" style="left:445px;top:729px;color:#040e16">Command</div>
<div class="t" style="left:11px;top:827px;color:#dee4ec;-webkit-text-stroke:0.55px currentColor">F2</div>
<div class="t" style="left:25px;top:827px;color:#040e16">Setup</div>
<div class="t" style="left:81px;top:827px;color:#dee4ec;-webkit-text-stroke:0.55px currentColor">F6</div>
<div class="t" style="left:95px;top:827px;color:#040e16">Sort</div>
<div class="t" style="left:151px;top:827px;color:#dee4ec;-webkit-text-stroke:0.55px currentColor">F9</div>
<div class="t" style="left:165px;top:827px;color:#040e16">Kill</div>
<div class="t" style="left:221px;top:827px;color:#dee4ec;-webkit-text-stroke:0.55px currentColor">F10</div>
<div class="t" style="left:242px;top:827px;color:#040e16">Quit</div>
<div class="t" style="left:298px;top:827px;color:#dee4ec;-webkit-text-stroke:0.55px currentColor">F12</div>
<div class="t" style="left:319px;top:827px;color:#040e16">Save</div>
<div class="t" style="left:354px;top:827px;color:#040e16">Config</div>
<svg width="1906" height="854" style="position:absolute;left:0;top:0"><path d="M72 45.9L69 52.1M65 101.9L62 108.1" stroke="#57c8a3" stroke-width="0.9" fill="none"/><path d="M233 45.9L230 52.1M247 45.9L244 52.1M429 45.9L426 52.1M443 45.9L440 52.1M450 45.9L447 52.1M541 45.9L538 52.1M555 45.9L552 52.1M562 45.9L559 52.1M828 45.9L825 52.1M842 45.9L839 52.1M1024 45.9L1021 52.1M1038 45.9L1035 52.1M1045 45.9L1042 52.1M1129 45.9L1126 52.1M1143 45.9L1140 52.1M1150 45.9L1147 52.1M1157 45.9L1154 52.1M65 59.9L62 66.1M142 59.9L139 66.1M310 59.9L307 66.1M660 59.9L657 66.1M737 59.9L734 66.1M905 59.9L902 66.1M289 73.9L286 80.1M492 73.9L489 80.1M884 73.9L881 80.1M1087 73.9L1084 80.1M1108 73.9L1105 80.1M1115 73.9L1112 80.1M23 101.9L20 108.1M30 101.9L27 108.1M30 241.9L27 248.1M30 381.9L27 388.1M23 423.9L20 430.1M30 423.9L27 430.1M30 563.9L27 570.1M30 703.9L27 710.1M240 829.9L237 836.1" stroke="#dee4ec" stroke-width="0.9" fill="none"/><path d="M65 115.9L62 122.1" stroke="#b6d35e" stroke-width="0.9" fill="none"/></svg>
</body></html>
